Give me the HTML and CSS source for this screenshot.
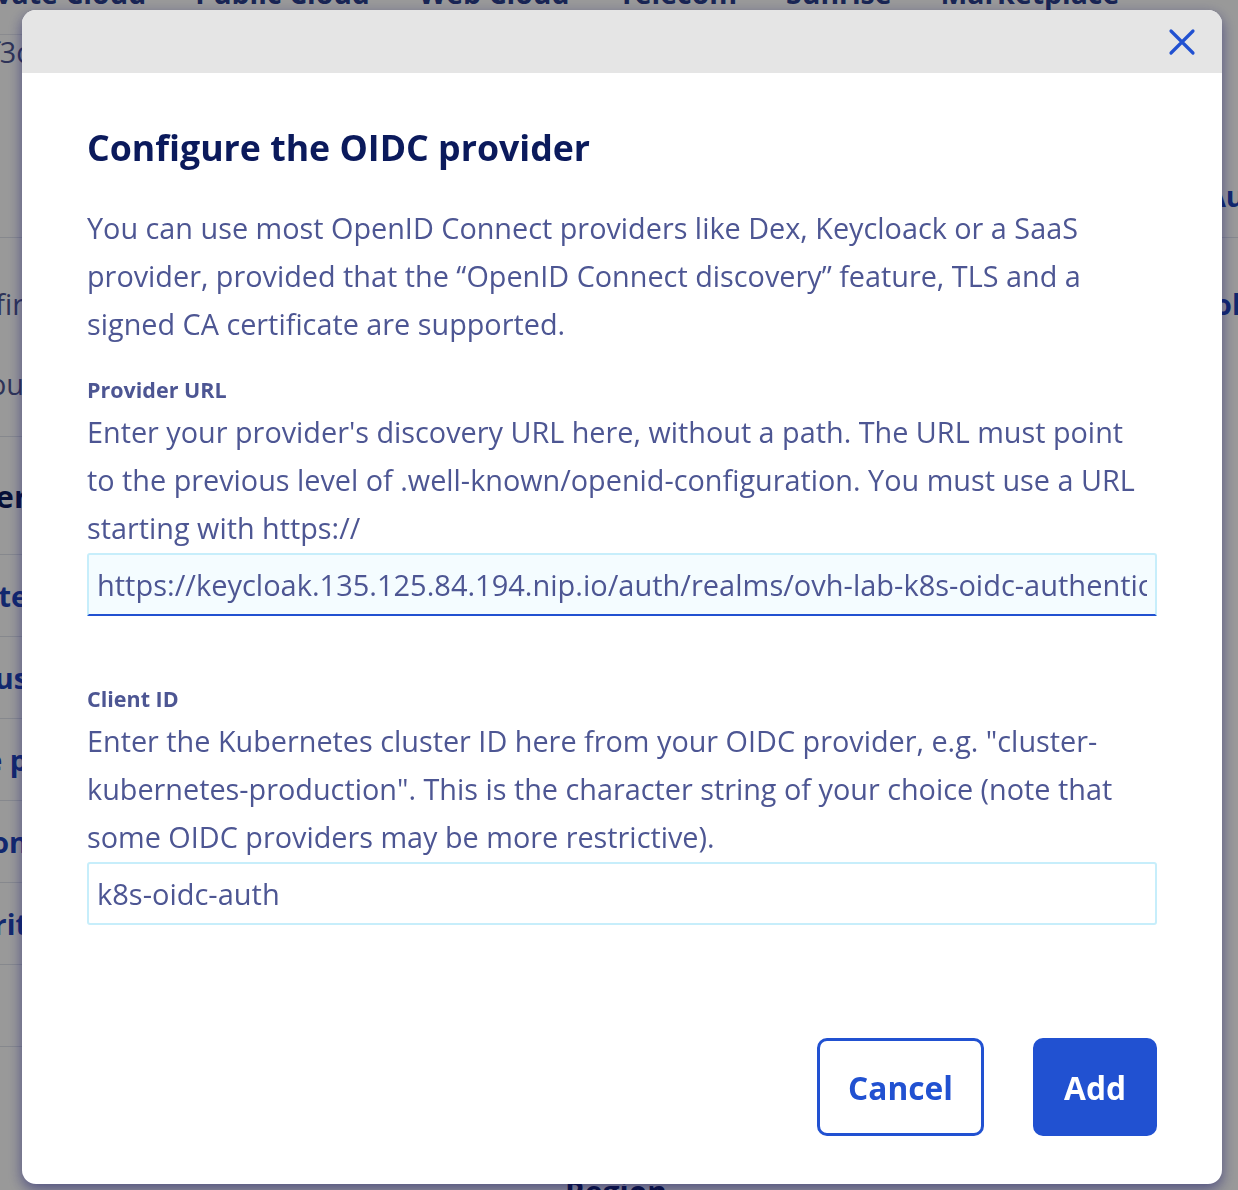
FILE: index.html
```html
<!DOCTYPE html>
<html lang="en">
<head>
<meta charset="utf-8">
<title>Configure the OIDC provider</title>
<link rel="stylesheet" href="styles.css">
</head>
<body>
<div class="page">
  <nav class="topnav">
    <span>Private Cloud</span>
    <span>Public Cloud</span>
    <span>Web Cloud</span>
    <span>Telecom</span>
    <span>Sunrise</span>
    <span>Marketplace</span>
  </nav>
  <div class="subbar">
    <div class="sub-left">f3c</div>
    <div class="sub-right">Aut</div>
  </div>
  <div class="columns">
    <aside class="side">
      <div class="side-block">
        <div class="side-text">Confir</div>
        <div class="side-text">Accou</div>
      </div>
      <div class="side-row title">Ser</div>
      <div class="side-row link">Ste</div>
      <div class="side-row link">Clus</div>
      <div class="side-row link">Node p</div>
      <div class="side-row link">Version</div>
      <div class="side-row link">Securit</div>
      <div class="side-row link"></div>
    </aside>
    <main class="main">
      <div class="main-row">Region</div>
    </main>
    <aside class="rightcol">
      <div class="right-row">Pol.</div>
    </aside>
  </div>
</div>

<div class="overlay">
  <div class="modal" role="dialog" aria-labelledby="mtitle">
    <div class="modal-head">
      <button class="close" aria-label="Close">
        <svg width="28" height="28" viewBox="0 0 28 28"><path d="M3 3 L25 25 M25 3 L3 25" stroke="#2151d1" stroke-width="3.2" stroke-linecap="round" fill="none"/></svg>
      </button>
    </div>
    <div class="modal-body">
      <h2 id="mtitle" class="title">Configure the OIDC provider</h2>
      <p class="intro">You can use most OpenID Connect providers like Dex, Keycloack or a SaaS provider, provided that the “OpenID Connect discovery” feature, TLS and a signed CA certificate are supported.</p>

      <div class="field">
        <label class="label" for="url">Provider URL</label>
        <p class="help">Enter your provider's discovery URL here, without a path. The URL must point to the previous level of .well-known/openid-configuration. You must use a URL starting with https://</p>
        <input id="url" class="input focused" type="text" value="https://keycloak.135.125.84.194.nip.io/auth/realms/ovh-lab-k8s-oidc-authentication">
      </div>

      <div class="field second">
        <label class="label" for="cid">Client ID</label>
        <p class="help">Enter the Kubernetes cluster ID here from your OIDC provider, e.g. "cluster-kubernetes-production". This is the character string of your choice (note that some OIDC providers may be more restrictive).</p>
        <input id="cid" class="input" type="text" value="k8s-oidc-auth">
      </div>

      <div class="actions">
        <button class="btn btn-outline">Cancel</button>
        <button class="btn btn-primary">Add</button>
      </div>
    </div>
  </div>
</div>
</body>
</html>
```

FILE: styles.css
```css
* { box-sizing: border-box; }
html, body { margin: 0; padding: 0; }
body {
  width: 1238px;
  height: 1190px;
  overflow: hidden;
  font-family: "Open Sans", "Liberation Sans", sans-serif;
  background: #ffffff;
}

/* background page */
.page {
  width: 1238px;
  height: 1190px;
  overflow: hidden;
  display: flex;
  flex-direction: column;
}
.topnav {
  display: flex;
  gap: 49px;
  margin-top: -24px;
  margin-left: -44px;
  height: 34px;
  font-weight: 700;
  font-size: 28.4px;
  line-height: 34px;
  color: #2b3e8c;
  white-space: nowrap;
  flex: none;
}
.subbar {
  height: 228px;
  padding-top: 32px;
  background: #ffffff;
  border-bottom: 1px solid #dfe3ec;
  display: flex;
  justify-content: space-between;
  flex: none;
}
.sub-left {
  width: 30px;
  overflow: hidden;
  display: flex;
  justify-content: flex-end;
  font-size: 28.8px;
  line-height: 30px;
  height: 34px;
  color: #4d5693;
  border-top: 1px solid #e6e8ef;
  margin-top: -8px;
  padding-top: 2px;
}
.sub-right {
  align-self: flex-end;
  width: 32px;
  margin-bottom: 22px;
  font-size: 28.8px;
  font-weight: 700;
  color: #1d43b8;
  white-space: nowrap;
  overflow: hidden;
}
.columns { display: flex; flex: 1; min-height: 0; }
.side { width: 44px; flex: none; }
.side-block {
  height: 199px;
  border-bottom: 1px solid #dfe3ec;
  padding-top: 46px;
}
.side-text {
  height: 80px;
  font-size: 28.8px;
  color: #4d5693;
  display: flex;
  justify-content: flex-end;
  overflow: hidden;
  white-space: nowrap;
  padding-right: 20px;
}
.side-row {
  height: 82px;
  display: flex;
  align-items: center;
  justify-content: flex-end;
  overflow: hidden;
  white-space: nowrap;
  font-size: 28.8px;
  border-bottom: 1px solid #dfe3ec;
  padding-right: 16px;
}
.side-row.title { color: #0b1a5c; font-weight: 700; font-size: 31px; height: 118px; }
.side-row.link { color: #1d43b8; font-weight: 700; }
.main {
  flex: 1;
  display: flex;
  align-items: flex-end;
  padding-left: 521px;
}
.main-row {
  font-size: 30px;
  line-height: 36px;
  font-weight: 700;
  color: #0b1a5c;
  margin-bottom: -20px;
}
.rightcol { width: 34px; flex: none; padding-top: 46px; overflow: hidden; }
.right-row {
  font-size: 28.8px;
  font-weight: 700;
  color: #1d43b8;
  white-space: nowrap;
  margin-left: -8px;
}

/* overlay + modal */
.overlay {
  position: fixed;
  inset: 0;
  background: rgba(0, 0, 0, 0.4);
}
.modal {
  position: absolute;
  left: 22px;
  top: 10px;
  width: 1200px;
  height: 1174px;
  background: #ffffff;
  border-radius: 14px;
  box-shadow: 0 5px 14px rgba(20, 20, 110, 0.55);
  overflow: hidden;
}
.modal-head {
  height: 63px;
  background: #e5e5e5;
  display: flex;
  justify-content: flex-end;
  align-items: center;
  padding-right: 26px;
}
.close {
  border: 0;
  background: transparent;
  padding: 0;
  width: 28px;
  height: 28px;
  display: flex;
  cursor: pointer;
}
.modal-body {
  padding: 52px 65px 49px 65px;
}
.title {
  margin: 0;
  font-size: 35.7px;
  line-height: 44px;
  font-weight: 700;
  color: #0b1a5c;
}
.intro, .help {
  margin: 0;
  font-size: 28.8px;
  line-height: 48px;
  color: #4d5693;
}
.intro { margin-top: 35px; }
.field { display: flex; flex-direction: column; margin-top: 28px; }
.field.second { margin-top: 69px; }
.label {
  font-size: 21.5px;
  line-height: 28px;
  font-weight: 700;
  color: #4d5693;
}
.help { margin-top: 4px; }
.input {
  margin-top: 1px;
  height: 63px;
  width: 100%;
  border: 2px solid #c7eefb;
  border-radius: 3px;
  padding: 0 8px;
  font-family: inherit;
  font-size: 29px;
  color: #4d5693;
  background: #ffffff;
  outline: none;
}
.input.focused {
  background: #f4fcff;
  border-bottom-color: #2151d1;
  border-bottom-left-radius: 0;
  border-bottom-right-radius: 0;
}
.actions {
  display: flex;
  justify-content: flex-end;
  gap: 49px;
  margin-top: 113px;
}
.btn {
  height: 98px;
  border-radius: 10px;
  font-family: inherit;
  font-size: 31.7px;
  font-weight: 700;
  cursor: pointer;
}
.btn-outline {
  width: 167px;
  background: #ffffff;
  border: 3px solid #2151d1;
  color: #2151d1;
}
.btn-primary {
  width: 124px;
  background: #2151d1;
  border: 3px solid #2151d1;
  color: #ffffff;
}
```
